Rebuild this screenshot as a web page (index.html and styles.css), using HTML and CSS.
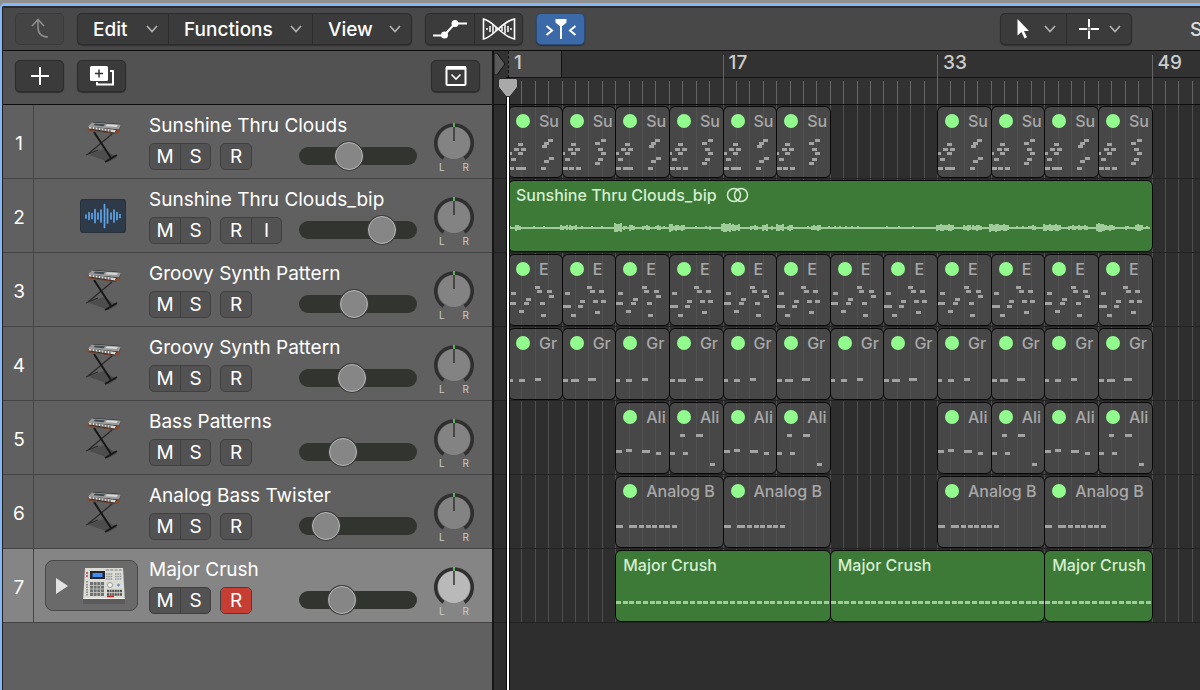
FILE: index.html
```html
<!DOCTYPE html>
<html lang="en">

<head>
    <meta charset="UTF-8" />
    <meta name="viewport" content="width=device-width, initial-scale=1" />
    <title>Tracks</title>
    <link rel="stylesheet" href="styles.css">
</head>

<body>
    <!-- shared icons -->
    <svg class="sprite" aria-hidden="true">
        <symbol id="chevron" viewBox="0 0 12 8">
            <path d="M1 1l5 5.500 5-5.500" fill="none" stroke="#b4b4b4" stroke-width="1.600" />
        </symbol>
        <symbol id="icon-keys" viewBox="0 0 46 50">
            <path d="M9 38l14-6 14 8-8 5z" fill="#4d4d4d" />
            <path d="M32 17L8 37M6 38l12-5" stroke="#2b2b2b" stroke-width="1.300" fill="none" />
            <path d="M14 15l17 26" stroke="#161616" stroke-width="2" fill="none" />
            <path d="M25 45l12-7" stroke="#161616" stroke-width="2" fill="none" />
            <path d="M8 12l5-7 28 2-2 8-4 2z" fill="#2a2523" />
            <path d="M12 5.500l29 2-2 5-31-3z" fill="#9a9a9a" />
            <path d="M15 6.500l10 .700-1.500 2-10-.900z" fill="#3d4a52" />
            <path d="M27 7.300l11 .800-1.500 2-11-.900z" fill="#d5d8d8" />
            <path d="M9 9.500l27 3.500-1 2.500-26-4z" fill="#d8d8d6" />
            <path d="M12 10v2.500M15 10.400v2.500M18 10.800v2.500M21 11.200v2.500M24 11.600v2.500M27 12v2.500M30 12.400v2.500" stroke="#333" stroke-width="1" />
            <path d="M7.500 10.500l1.500.200v3l-1.500-.500zM35 14l5-2v3l-5 2z" fill="#8a4a30" />
            <path d="M9 13l26 3.500" stroke="#6e3f2b" stroke-width="1" />
        </symbol>
        <symbol id="icon-wave" viewBox="0 0 46 34">
            <rect x="0" y="0" width="46" height="34" rx="3" fill="#2f3a48" />
            <rect x=".5" y=".5" width="45" height="33" rx="3" fill="none" stroke="#27303b" />
            <path d="M6 16v3M9 13.500v7M12 14.500v5M15 10.500v13M18 14v6M21 11v12M24.500 5.500v23M27.500 10v14M31 14v6M34 11v12M37 13.500v7M40 15.500v3" stroke="#5fa5ec" stroke-width="1.700" stroke-linecap="round" />
        </symbol>
        <symbol id="icon-drums" viewBox="0 0 44 40">
            <path d="M3 2h38l2 34H1z" fill="#dcdcd6" />
            <path d="M1 33h42v5H1z" fill="#5b5b5b" />
            <path d="M1 32.500h42" stroke="#f0f0ec" />
            <rect x="8" y="5" width="15" height="8" fill="#23262b" />
            <rect x="10.500" y="7" width="10" height="4" fill="#3f8df5" />
            <path d="M5 6v2M5 9v2" stroke="#c33" stroke-width="1.500" />
            <path d="M5 15v2M5 18v12" stroke="#8e8e8e" stroke-width="2" stroke-dasharray="1.500 1" />
            <rect x="8" y="16" width="14" height="14" fill="#6d7170" />
            <path d="M8 19.500h14M8 23h14M8 26.500h14M11.500 16v14M15 16v14M18.500 16v14" stroke="#c8c8c4" stroke-width=".8" />
            <path d="M24 4h16" stroke="#999" stroke-width="1.500" stroke-dasharray="3 1.300" />
            <path d="M24 8h7M24 10.500h7M24 13h7M33 8h7M33 10.500h7M33 13h7" stroke="#909694" stroke-width="1.500" stroke-dasharray="1.500 .800" />
            <circle cx="28" cy="19" r="2.500" fill="#f4f4f0" stroke="#9a9a9a" />
            <circle cx="36.500" cy="19" r="2" fill="#7898bd" stroke="#ddd" />
            <path d="M25 25h15M25 28.500h15" stroke="#4d4f50" stroke-width="2.500" stroke-dasharray="2 .600" />
            <path d="M25 30.500h7" stroke="#c22" stroke-width="1.500" />
        </symbol>
    </svg>

    <div class="window">
        <header class="toolbar">
            <button class="btn dim" aria-label="Back">
                <svg width="20" height="22" viewBox="0 0 20 22"><path d="M8 2v7c0 6 3 10 10 10M2 8l6-6.500L14 8" /></svg>
            </button>
            <nav class="group menus">
                <button class="edit">Edit<svg class="chev"><use href="#chevron" /></svg></button>
                <button class="functions">Functions<svg class="chev"><use href="#chevron" /></svg></button>
                <button class="view">View<svg class="chev"><use href="#chevron" /></svg></button>
            </nav>
            <div class="group pair">
                <button aria-label="Show automation">
                    <svg width="34" height="22" viewBox="0 0 34 22">
                        <path d="M0 17.500h11L22 5.500h12" stroke-width="2" />
                        <circle cx="11.500" cy="17" r="3.500" class="solid" />
                        <circle cx="22" cy="5.500" r="3.500" class="solid" />
                    </svg>
                </button>
                <button aria-label="Show flex">
                    <svg width="34" height="22" viewBox="0 0 34 22">
                        <path d="M1.500 1C12 3 20 19 32.500 21V1C20 3 12 19 1.500 21z" />
                        <path d="M5 10v2M8 8v6M11 6.500v9M14 9v4M20 9v4M23 6.500v9M26 8v6M29 10v2" stroke-width="1.500" />
                    </svg>
                </button>
            </div>
            <button class="btn active" aria-label="Catch playhead">
                <svg width="32" height="22" viewBox="0 0 32 22">
                    <path d="M1.500 8L7 12.500 1.500 17M30.500 8L25 12.500l5.500 4.500" stroke-width="2" />
                    <path d="M10.500 1h11v3.500L17.500 8h-3l-4-3.500z" class="solid" />
                    <path d="M16 7v14" stroke-width="2" />
                </svg>
            </button>
            <div class="group tools">
                <button aria-label="Pointer tool">
                    <svg width="19" height="22" viewBox="-3 0 19 22"><path d="M1.500 1v16.500l4-3.500 3 6.500 2.500-1.200-3-6.300H13z" class="solid" /></svg>
                    <svg class="chev"><use href="#chevron" /></svg>
                </button>
                <button aria-label="Marquee tool">
                    <svg width="20" height="22" viewBox="0 0 20 22"><path d="M0 11h8M12 11h8M10 1v8M10 13v8" stroke-width="2" /><path d="M8 11h4M10 9v4" stroke-width="1" opacity=".6" /></svg>
                    <svg class="chev"><use href="#chevron" /></svg>
                </button>
            </div>
            <span class="snap">S</span>
        </header>

        <main class="workspace">
            <section class="panel">
                <div class="panel-bar">
                    <button class="btn" aria-label="Add track">
                        <svg width="18" height="18" viewBox="0 0 18 18"><path d="M0 9h18M9 0v18" stroke-width="2" /></svg>
                    </button>
                    <button class="btn" aria-label="Duplicate track">
                        <svg width="26" height="22" viewBox="0 0 26 22">
                            <path d="M21 6h3v13.500H8V17" stroke-width="2" />
                            <rect x="1" y="1" width="18" height="15" rx="1.500" class="solid" />
                            <path d="M6 8.500h8M10 4.500v8" stroke="#333" stroke-width="1.500" />
                        </svg>
                    </button>
                    <button class="btn last" aria-label="Global tracks">
                        <svg width="22" height="22" viewBox="0 0 22 22">
                            <rect x="1.500" y="2" width="19" height="18" rx="1" stroke-width="2" />
                            <path d="M1 3h20" stroke-width="3.500" />
                            <path d="M6.500 9.500l4.500 4.500 4.500-4.500" />
                        </svg>
                    </button>
                </div>
                <div id="tracks"></div>
            </section>

            <section class="timeline">
                <div class="ruler">
                    <svg class="start-marker" viewBox="0 0 12 22"><path d="M0 0h3l8 11-8 11H0z" fill="#5a5a5a" stroke="#111" /></svg>
                    <div class="cycle"></div>
                    <div class="bars ticks" id="ruler"></div>
                </div>
                <div class="lanes">
                    <div class="bars gridlines" id="gridlines"></div>
                    <div id="lanes"></div>
                </div>
                <div class="playhead">
                    <svg width="20" height="20" viewBox="0 0 20 20"><path d="M2 .500h16l1.500 1.500v7L12 18.500H8L.500 9V2z" fill="#a9a9a9" stroke="#2a2a2a" /></svg>
                </div>
            </section>
        </main>
    </div>

    <script src="script.js"></script>
</body>

</html>
```
FILE: styles.css
```css
* {
    box-sizing: border-box;
}

body {
    --bar: calc(644px / 48); /* width of one bar in the timeline */
    font-family: Inter, "Liberation Sans", sans-serif;
    background: #8f8f8f;
    color: #fff;
    margin: 0;
}

button {
    font: inherit;
    color: inherit;
    margin: 0;
    padding: 0;
    border: none;
    background: none;
}

svg {
    display: block;
    flex: none;
    fill: none;
    stroke: none;
}

.sprite {
    position: absolute;
    width: 0;
    height: 0;
}

.window {
    display: flex;
    flex-direction: column;
    min-height: calc(100vh - 3px);
    margin-top: 3px;
    border-top: 3px solid #86b8f5;
    border-left: 2px solid #86b8f5;
    border-top-left-radius: 5px;
    background: #2e2e2e;
    overflow: hidden;
}

/* toolbar */
.toolbar {
    display: flex;
    align-items: center;
    height: 45px;
    padding: 0 0 0 12px;
    gap: 13px;
    background: #484848;
    border-top: 2px solid #2a2a2a;
    border-left: 1px solid #222;
    border-bottom: 1px solid #0c0c0c;
    white-space: nowrap;
    overflow: hidden;
}

.btn,
.group {
    display: flex;
    align-items: center;
    justify-content: center;
    flex: none;
    height: 32px;
    background: #3b3b3b;
    border: 1px solid #2c2c2c;
    border-radius: 5px;
    box-shadow: 0 1px 1px #303030;
}

.btn {
    width: 49px;
}

.btn svg,
.group svg {
    stroke: #fff;
    stroke-width: 1.6;
}

.btn .solid,
.group .solid {
    fill: #fff;
    stroke: none;
}

.btn.dim {
    background: #444;
    border-color: #3a3a3a;
    box-shadow: none;
}

.btn.dim svg {
    stroke: #8c8c8c;
}

.btn.active {
    background: #3c69a8;
    border-color: #2c4a76;
}

.group button {
    display: flex;
    align-items: center;
    justify-content: space-between;
    height: 30px;
}

.group button + button {
    border-left: 1px solid #2c2c2c;
}

.group .chev {
    width: 12px;
    height: 8px;
    stroke: none;
}

.menus {
    font-size: 19px;
    font-weight: 500;
}

.menus button {
    padding: 0 10px 0 15px;
}

.menus .edit {
    width: 90px;
}

.menus .functions {
    width: 144px;
}

.menus .view {
    width: 99px;
}

.pair button {
    width: 48px;
    justify-content: center;
}

.tools {
    margin-left: auto;
}

.tools button {
    width: 65px;
    padding: 0 10px 0 12px;
}

.snap {
    width: 10px;
    margin-left: 45px;
    font-size: 19px;
    font-weight: 500;
    color: #ddd;
}

/* track headers */
.workspace {
    display: grid;
    grid-template-columns: 492px 1fr;
    flex: 1;
}

.panel {
    background: #606060;
    border-left: 1px solid #222;
    border-right: 2px solid #161616;
}

.panel-bar {
    display: flex;
    align-items: center;
    gap: 13px;
    height: 54px;
    padding: 0 12px 4px;
    background: #525252;
    border-bottom: 1px solid #0c0c0c;
}

.last {
    margin-left: auto;
}

.track {
    display: flex;
    align-items: center;
    height: 74px;
    padding-right: 18px;
    border-bottom: 1px solid #444;
}

.track.selected {
    background: #858585;
}

.number {
    flex: none;
    display: flex;
    align-items: center;
    justify-content: center;
    width: 31px;
    align-self: stretch;
    border-right: 1px solid #444;
    padding: 4px 0 0 2px;
    font-size: 19px;
}

.patch {
    flex: none;
    display: flex;
    align-items: center;
    justify-content: flex-end;
    width: 93px;
    height: 51px;
    margin: 0 11px;
    padding: 0 11px 0 9px;
    border: 1px solid transparent;
    border-radius: 8px;
}

.selected .patch {
    justify-content: space-between;
    background: #6a6a6a;
    border-color: #484848;
}

.patch .keys {
    width: 46px;
    height: 50px;
}

.patch .wave {
    width: 46px;
    height: 34px;
}

.patch .drums {
    width: 44px;
    height: 40px;
}

.info {
    flex: 1;
    min-width: 0;
    padding-top: 1px;
}

.name {
    height: 24px;
    margin-bottom: 4px;
    font-size: 19px;
    line-height: 24px;
    white-space: nowrap;
}

.controls {
    display: flex;
    align-items: center;
    gap: 9px;
    height: 28px;
}

.keys-group {
    display: flex;
    background: #525252;
    border: 1px solid #404040;
    border-radius: 5px;
    overflow: hidden;
}

.keys-group button {
    width: 30px;
    height: 25px;
    font-size: 19px;
    line-height: 25px;
}

.keys-group button + button {
    border-left: 1px solid #404040;
}

.keys-group .armed {
    background: #c63e33;
}

.fader {
    appearance: none;
    width: 118px;
    height: 28px;
    margin: 0 0 0 auto;
    background: none;
}

.fader::-webkit-slider-runnable-track {
    height: 18px;
    border-radius: 9px;
    background: #323430;
}

.fader::-webkit-slider-thumb {
    appearance: none;
    width: 28px;
    height: 28px;
    margin-top: -5px;
    border: 1px solid #b8b8b8;
    border-radius: 50%;
    background: #868686;
    box-shadow: 0 0 0 1px #3c3c3c;
}

.pan {
    position: relative;
    flex: none;
    width: 40px;
    margin: 11px 0 0 17px;
}

.pan input {
    position: absolute;
    inset: 0;
    width: 40px;
    height: 40px;
    margin: 0;
    opacity: 0;
}

.pan .dial {
    fill: #838383;
}

.selected .pan .dial {
    fill: #b9b9b9;
}

.sides {
    display: flex;
    justify-content: space-between;
    padding: 0 5px;
    font-size: 10px;
    line-height: 8px;
    color: #ccc;
}

/* timeline */
.timeline {
    position: relative;
    min-width: 0;
    overflow: hidden;
}

.ruler {
    position: relative;
    height: 54px;
    padding-left: 14px;
    background: #323232;
    border-bottom: 1px solid #0c0c0c;
}

.ruler::before {
    content: "";
    position: absolute;
    inset: 26px 0 auto 14px;
    border-top: 1px solid #151515;
}

.start-marker {
    position: absolute;
    left: 0;
    top: 2px;
    width: 12px;
    height: 22px;
}

.cycle {
    width: calc(var(--bar) * 4);
    height: 27px;
    background: #4a4a4a;
    border-left: 1px dashed #111;
    border-right: 1px solid #111;
    border-bottom: 1px solid #111;
}

.bars {
    position: absolute;
    inset: 0 0 0 14px;
    display: grid;
    grid-template-columns: repeat(52, var(--bar));
    overflow: hidden;
}

.ticks span {
    align-self: end;
    height: 23px;
    border-left: 1px solid #666;
}

.ticks .major {
    height: 49px;
    padding-left: 5px;
    font-size: 19px;
    font-weight: 500;
    line-height: 16px;
    color: #ccc;
}

.ticks span:first-child {
    border-color: transparent;
}

.lanes {
    position: relative;
}

.gridlines span {
    border-left: 1px solid #4e4e4e;
}

.lane {
    position: relative;
    display: grid;
    grid-template-columns: repeat(48, var(--bar));
    height: 74px;
    padding: 1px 0 1px 14px;
    border-bottom: 1px solid #222;
}

.region {
    display: flex;
    flex-direction: column;
    min-width: 0;
    height: 72px;
    margin-right: -1px;
    background: rgba(83, 83, 83, 0.7);
    border: 1px solid #080808;
    border-radius: 6px;
    overflow: hidden;
    color: #a8a8a8;
}

.region.green {
    background: #3d7a38;
    color: #d5efd0;
}

.title {
    display: flex;
    align-items: center;
    gap: 9px;
    height: 28px;
    margin-bottom: 1px;
    padding-left: 7px;
    font-size: 16px;
    font-weight: 500;
    line-height: 28px;
    white-space: nowrap;
}

.dot {
    flex: none;
    width: 14px;
    height: 14px;
    border-radius: 50%;
    background: #92fb8e;
}

.title svg {
    stroke: #d5efd0;
    stroke-width: 1.5;
}

.notes {
    width: 100%;
    height: 40px;
    fill: #a3a3a3;
}

.green .notes {
    fill: #a0cc9c;
}

.playhead {
    position: absolute;
    top: 27px;
    bottom: 0;
    left: 13px;
    width: 2px;
    background: #fff;
    outline: 1px solid #0c0c0c;
}

.playhead svg {
    position: absolute;
    left: -9px;
    top: 0;
}
```
FILE: script.js
```js
const tracks = [
    { name: 'Sunshine Thru Clouds', icon: 'keys', volume: 40 },
    { name: 'Sunshine Thru Clouds_bip', icon: 'wave', volume: 77, input: true },
    { name: 'Groovy Synth Pattern', icon: 'keys', volume: 46 },
    { name: 'Groovy Synth Pattern', icon: 'keys', volume: 43 },
    { name: 'Bass Patterns', icon: 'keys', volume: 33 },
    { name: 'Analog Bass Twister', icon: 'keys', volume: 14 },
    { name: 'Major Crush', icon: 'drums', volume: 32, selected: true }
];

// notes are [x, y, length]
const patterns = {
    sun: [
        [[0, 16, 3], [5, 12], [12, 12], [9, 7], [9, 16], [2, 22], [0, 31], [7, 31], [12, 31], [33, 9], [35, 6], [39, 3], [32, 31], [35, 24], [40, 21]],
        [[0, 16, 2], [5, 12], [12, 12], [8, 7], [8, 16], [2, 22], [0, 31], [6, 31], [13, 31], [32, 6], [38, 3], [35, 12], [38, 16], [35, 22], [32, 26]]
    ],
    groove: [
        [[2, 8], [26, 2], [28, 6], [38, 6], [40, 11], [17, 14], [15, 18], [0, 18, 7], [31, 18], [10, 26], [32, 30]],
        [[2, 8], [24, 2], [27, 6], [36, 6], [17, 16], [30, 16], [38, 16], [0, 21, 8], [15, 21], [32, 27], [8, 30]]
    ],
    stab: [
        [[0, 21, 4], [10, 21, 6], [26, 20, 6]],
        [[0, 21, 5], [8, 21, 8], [25, 20, 8]]
    ],
    bass: [
        [[0, 18, 6], [10, 17, 6], [26, 18, 8], [40, 20]],
        [[0, 20], [13, 20], [10, 2], [26, 2, 7], [40, 31]]
    ],
    twist: [
        [[0, 19, 7], [13, 19, 8], [23, 19], [30, 19], [36, 19], [43, 19], [49, 19], [56, 19]]
    ]
};

// audio peaks are [x, length, height]
const peaks = [
    [0, 5, 3], [6, 6, 6], [16, 2, 3], [19, 3, 3], [24, 5, 3], [32, 3, 3], [51, 8, 5], [60, 7, 5], [72, 3, 3], [80, 4, 3],
    [88, 6, 3], [105, 8, 9], [114, 4, 4], [120, 6, 6], [133, 8, 5], [146, 6, 5], [154, 4, 4], [160, 4, 9], [164, 12, 6],
    [186, 6, 3], [196, 6, 4], [212, 9, 9], [221, 10, 7], [241, 8, 5], [253, 5, 7], [260, 4, 4], [267, 8, 7], [278, 6, 6],
    [298, 5, 4], [304, 7, 6], [317, 10, 3], [330, 24, 3], [373, 8, 3], [385, 10, 3], [401, 6, 3], [427, 10, 7],
    [437, 8, 7], [454, 8, 6], [463, 9, 6], [480, 9, 8], [490, 10, 7], [507, 13, 3], [521, 5, 5], [534, 17, 7],
    [559, 20, 5], [587, 7, 9], [594, 12, 6], [614, 7, 4], [626, 7, 7], [635, 6, 3]
];

// regions are [first bar, length in bars]
const every4 = (...starts) => starts.map(bar => [bar, 4]);
const verse = every4(1, 5, 9, 13, 17, 21);
const outro = every4(33, 37, 41, 45);

const lanes = [
    { title: 'Su', pattern: 'sun', regions: [...verse, ...outro] },
    { title: 'Sunshine Thru Clouds_bip', audio: true, regions: [[1, 48]] },
    { title: 'E', pattern: 'groove', regions: [...verse, ...every4(25, 29), ...outro] },
    { title: 'Gr', pattern: 'stab', regions: [...verse, ...every4(25, 29), ...outro] },
    { title: 'Ali', pattern: 'bass', regions: [...every4(9, 13, 17, 21), ...outro] },
    { title: 'Analog B', pattern: 'twist', regions: [[9, 8], [17, 8], [33, 8], [41, 8]] },
    { title: 'Major Crush', drums: true, regions: [[9, 16], [25, 16], [41, 8]] }
];

function rect(x, y, w, h) {
    return `<rect x="${x}" y="${y}" width="${w}" height="${h}"/>`;
}

function drawNotes(lane, index, bars) {
    if (lane.audio) {
        let out = rect(0, 17, 641, 2);
        for (const [x, length, height] of peaks) {
            for (let i = 0; i < length; i += 2) {
                const h = height - (i * 5 + x) % 3;
                out += rect(x + i, 18 - Math.round(h / 2), 2, h);
            }
        }
        return out;
    }
    if (lane.drums) {
        let out = '';
        for (let i = 0; i < bars * 2; i++) out += rect(Math.round(i * 6.71), 21, 5, 3);
        return out;
    }
    const set = patterns[lane.pattern];
    return set[index % set.length].map(([x, y, w = 5]) => rect(x, y, w, 3)).join('');
}

document.getElementById('tracks').innerHTML = tracks.map((t, i) => `
    <div class="track ${t.selected ? 'selected' : ''}">
        <div class="number">${i + 1}</div>
        <div class="patch">
            ${t.selected ? '<svg width="14" height="18" viewBox="0 0 14 18"><path d="M1 1l12 8-12 8z" fill="#e2e2e2"/></svg>' : ''}
            <svg class="${t.icon}"><use href="#icon-${t.icon}"/></svg>
        </div>
        <div class="info">
            <div class="name">${t.name}</div>
            <div class="controls">
                <div class="keys-group"><button aria-label="Mute">M</button><button aria-label="Solo">S</button></div>
                <div class="keys-group"><button class="${t.selected ? 'armed' : ''}" aria-label="Record">R</button>${t.input ? '<button aria-label="Input">I</button>' : ''}</div>
                <input class="fader" type="range" value="${t.volume}" aria-label="Volume ${i + 1}">
            </div>
        </div>
        <div class="pan">
            <svg width="40" height="40" viewBox="0 0 40 40">
                <path d="M9.500 35.200A18.300 18.300 0 1 1 30.500 35.200" stroke="#2f2f2f" stroke-width="3.500"/>
                <circle class="dial" cx="20" cy="20" r="16"/>
                <path d="M20 4v14" stroke="#333" stroke-width="1.500"/>
                <path d="M20 0v4" stroke="#6fdc6a" stroke-width="1.500"/>
            </svg>
            <input type="range" aria-label="Pan ${i + 1}">
            <div class="sides"><span>L</span><span>R</span></div>
        </div>
    </div>`).join('');

document.getElementById('lanes').innerHTML = lanes.map(lane => {
    const green = lane.audio || lane.drums;
    return `<div class="lane">${lane.regions.map(([start, bars], i) => `
        <div class="region ${green ? 'green' : ''}" style="grid-area: 1 / ${start} / 2 / span ${bars}">
            <div class="title">
                ${green ? '' : '<span class="dot"></span>'}<span>${lane.title}</span>
                ${lane.audio ? '<svg width="24" height="16" viewBox="0 0 24 16"><circle cx="8" cy="8" r="6.500"/><circle cx="15" cy="8" r="6.500"/></svg>' : ''}
            </div>
            <svg class="notes">${drawNotes(lane, i, bars)}</svg>
        </div>`).join('')}</div>`;
}).join('');

let ticks = '';
let lines = '';
for (let bar = 1; bar <= 52; bar++) {
    ticks += bar % 16 === 1 ? `<span class="major">${bar}</span>` : '<span></span>';
    lines += '<span></span>';
}
document.getElementById('ruler').innerHTML = ticks;
document.getElementById('gridlines').innerHTML = lines;
```
